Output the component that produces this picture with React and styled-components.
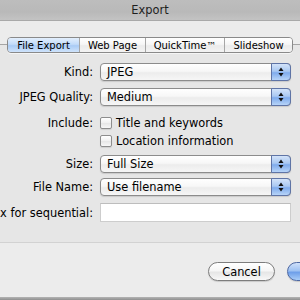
import React from 'react';
import styled, { createGlobalStyle } from 'styled-components';

const GlobalStyle = createGlobalStyle`
  body {
    margin: 0;
    background: #ececec;
    overflow: hidden;
    font-family: "DejaVu Sans", "Liberation Sans", sans-serif;
  }
`;

const Window = styled.div`
  width: 300px;
  height: 300px;
  display: flex;
  flex-direction: column;
  background: #ececec;
  overflow: hidden;
`;

const TitleBar = styled.div`
  height: 21px;
  flex-shrink: 0;
  display: flex;
  align-items: center;
  justify-content: center;
  background: linear-gradient(#bdbdbd, #b9b9b9 60%, #c3c3c3);
  border-bottom: 1px solid #a9a9a9;
  box-sizing: border-box;
  font-size: 11.4px;
  color: #1e1e1e;
`;

const TabRow = styled.div`
  display: flex;
  justify-content: center;
  margin-top: 16px;
  margin-bottom: -9px;
  position: relative;
  z-index: 1;
`;

const Segmented = styled.div`
  display: flex;
  height: 16px;
  border: 1px solid #8a8a8a;
  border-radius: 4px;
  overflow: hidden;
  box-sizing: border-box;
  box-shadow: 0 1px 0 rgba(255,255,255,0.6);
`;

const Tab = styled.div`
  width: ${p => p.$w}px;
  display: flex;
  align-items: center;
  justify-content: center;
  font-size: 10px;
  color: #000;
  border-left: ${p => (p.$first ? 'none' : '1px solid #a6a6a6')};
  background: ${p =>
    p.$active
      ? 'linear-gradient(#e3effd, #c2dbf9 45%, #a9cbf5 55%, #cfe3fb)'
      : 'linear-gradient(#ffffff, #f6f6f6 45%, #ebebeb 55%, #f3f3f3)'};
`;

const Panel = styled.div`
  background: #e6e6e6;
  border-top: 1px solid #a5a5a5;
  border-bottom: 1px solid #d2d2d2;
  padding: 18px 0 20px;
  display: flex;
  flex-direction: column;
`;

const Row = styled.div`
  display: grid;
  grid-template-columns: 93px 191px;
  column-gap: 7px;
  align-items: center;
  margin-top: ${p => p.$top || 0}px;
`;

const Label = styled.div`
  justify-self: end;
  white-space: nowrap;
  font-size: 11.4px;
  color: #000;
`;

const Popup = styled.div`
  height: 18px;
  box-sizing: border-box;
  display: flex;
  align-items: stretch;
  border: 1px solid #8c8c8c;
  border-radius: 4px;
  background: linear-gradient(#ffffff, #f7f7f7 45%, #ececec 55%, #f6f6f6);
  box-shadow: 0 1px 1px rgba(0,0,0,0.12);
`;

const PopupText = styled.div`
  flex: 1;
  display: flex;
  align-items: center;
  padding-left: 6px;
  font-size: 11.4px;
  color: #000;
`;

const ArrowPart = styled.div`
  width: 18px;
  margin: -1px -1px -1px 0;
  border: 1px solid #5f74a6;
  border-radius: 0 4px 4px 0;
  display: flex;
  align-items: center;
  justify-content: center;
  background: linear-gradient(#d3e3f9, #a9c8f2 45%, #7fabec 55%, #b7d4f8);
`;

const CheckLine = styled.label`
  display: flex;
  align-items: center;
  gap: 4px;
  height: 16px;
  font-size: 11.4px;
  color: #000;
`;

const Box = styled.span`
  width: 12px;
  height: 12px;
  box-sizing: border-box;
  border: 1px solid #8d8d8d;
  border-radius: 2px;
  background: linear-gradient(#ffffff, #f0f0f0 50%, #e6e6e6 51%, #f7f7f7);
  box-shadow: 0 1px 1px rgba(0,0,0,0.1);
`;

const Field = styled.div`
  height: 19px;
  box-sizing: border-box;
  background: #fff;
  border: 1px solid #cdcdcd;
  border-top-color: #bdbdbd;
`;

const Footer = styled.div`
  flex: 1;
  display: flex;
  justify-content: flex-end;
  align-items: flex-start;
  gap: 12px;
  padding-top: 19px;
  margin-right: -72px;
`;

const PushButton = styled.div`
  width: ${p => p.$w || 67}px;
  height: 19px;
  box-sizing: border-box;
  border: 1px solid ${p => (p.$primary ? '#4d68a3' : '#7d7d7d')};
  border-radius: 10px;
  display: flex;
  align-items: center;
  justify-content: center;
  font-size: 11.4px;
  color: #000;
  background: ${p =>
    p.$primary
      ? 'linear-gradient(#cfe0f9, #9fc2f2 45%, #6e9fe9 55%, #a9cdf8)'
      : 'linear-gradient(#ffffff, #f6f6f6 45%, #e6e6e6 55%, #f8f8f8)'};
  box-shadow: 0 1px 1px rgba(0,0,0,0.15);
`;

const BottomEdge = styled.div`
  height: 3px;
  flex-shrink: 0;
  background: linear-gradient(#b4b4b4, #8f8f8f);
`;

const Arrows = () => (
  <svg width="6" height="10" viewBox="0 0 6 10">
    <path d="M3 0.5 L5.5 4 L0.5 4 Z" fill="#111" />
    <path d="M3 9.5 L5.5 6 L0.5 6 Z" fill="#111" />
  </svg>
);

const Select = ({ value }) => (
  <Popup>
    <PopupText>{value}</PopupText>
    <ArrowPart><Arrows /></ArrowPart>
  </Popup>
);

const tabs = [
  { name: 'File Export', w: 71, active: true },
  { name: 'Web Page', w: 65 },
  { name: 'QuickTime™', w: 78 },
  { name: 'Slideshow', w: 67 },
];

export default function App() {
  return (
    <Window>
      <GlobalStyle />
      <TitleBar>Export</TitleBar>

      <TabRow>
        <Segmented>
          {tabs.map((t, i) => (
            <Tab key={t.name} $w={t.w} $active={t.active} $first={i === 0}>
              {t.name}
            </Tab>
          ))}
        </Segmented>
      </TabRow>

      <Panel>
        <Row>
          <Label>Kind:</Label>
          <Select value="JPEG" />
        </Row>
        <Row $top={7}>
          <Label>JPEG Quality:</Label>
          <Select value="Medium" />
        </Row>
        <Row $top={9}>
          <Label>Include:</Label>
          <CheckLine><Box />Title and keywords</CheckLine>
        </Row>
        <Row $top={2}>
          <span />
          <CheckLine><Box />Location information</CheckLine>
        </Row>
        <Row $top={6}>
          <Label>Size:</Label>
          <Select value="Full Size" />
        </Row>
        <Row $top={5}>
          <Label>File Name:</Label>
          <Select value="Use filename" />
        </Row>
        <Row $top={7}>
          <Label>Prefix for sequential:</Label>
          <Field />
        </Row>
      </Panel>

      <Footer>
        <PushButton>Cancel</PushButton>
        <PushButton $primary $w={85}>Export</PushButton>
      </Footer>
      <BottomEdge />
    </Window>
  );
}
